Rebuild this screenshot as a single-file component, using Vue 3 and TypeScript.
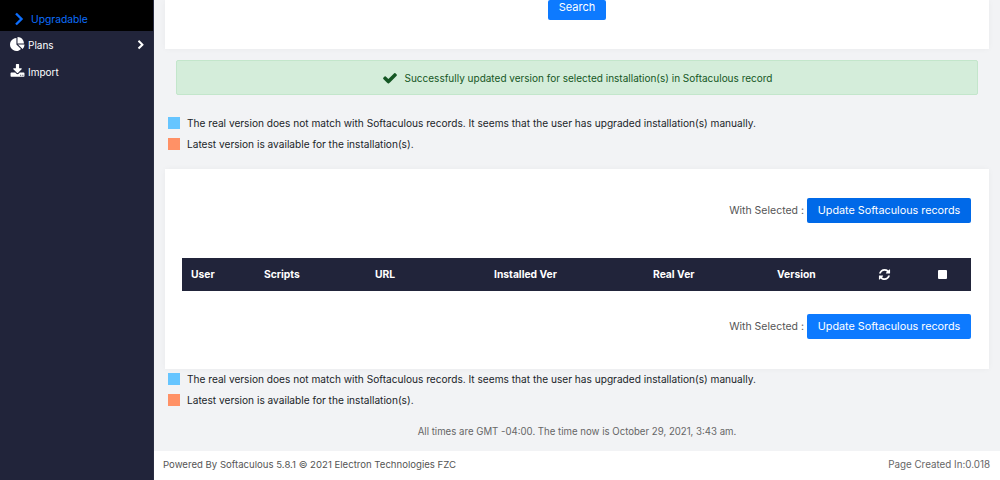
<script setup lang="ts">
const legends = [
  { color: 'blue', text: 'The real version does not match with Softaculous records. It seems that the user has upgraded installation(s) manually.' },
  { color: 'orange', text: 'Latest version is available for the installation(s).' },
]
const columns = [
  { label: 'User', width: 73 },
  { label: 'Scripts', width: 111 },
  { label: 'URL', width: 119 },
  { label: 'Installed Ver', width: 159 },
  { label: 'Real Ver', width: 124 },
  { label: 'Version', width: 110 },
]
</script>

<template>
  <div class="page">
    <aside class="sidebar">
      <div class="nav-active">
        <svg class="chev-active" viewBox="0 0 10 14" width="10" height="14"><path d="M2 1.5 L7.5 7 L2 12.5" fill="none" stroke="#0d6efd" stroke-width="2.4" /></svg>
        <span>Upgradable</span>
      </div>
      <div class="nav-item">
        <svg viewBox="0 0 1792 1792" width="15" height="15"><path fill="#fff" d="M768 890l546 546q-106 108-247.500 168t-298.500 60q-209 0-385.500-103t-279.500-279.500-103-385.500 103-385.500 279.500-279.500 385.500-103v762zm187 6h773q0 157-60 298.500t-168 247.500zm709-128h-768v-768q209 0 385.500 103t279.500 279.500 103 385.500z" /></svg>
        <span class="nav-label">Plans</span>
        <svg class="chev" viewBox="0 0 1792 1792" width="10" height="10"><path fill="#fff" d="M1363 877l-742 742q-19 19-45 19t-45-19l-166-166q-19-19-19-45t19-45l531-531-531-531q-19-19-19-45t19-45l166-166q19-19 45-19t45 19l742 742q19 19 19 45t-19 45z" /></svg>
      </div>
      <div class="nav-item import">
        <svg viewBox="0 0 1792 1792" width="15" height="15"><path fill="#fff" d="M1344 1344q0-26-19-45t-45-19-45 19-19 45 19 45 45 19 45-19 19-45zm256 0q0-26-19-45t-45-19-45 19-19 45 19 45 45 19 45-19 19-45zm128-224v320q0 40-28 68t-68 28h-1472q-40 0-68-28t-28-68v-320q0-40 28-68t68-28h465l135 136q58 56 136 56t136-56l136-136h464q40 0 68 28t28 68zm-325-569q17 41-14 70l-448 448q-18 19-45 19t-45-19l-448-448q-31-29-14-70 17-39 59-39h256v-448q0-26 19-45t45-19h256q26 0 45 19t19 45v448h256q42 0 59 39z" /></svg>
        <span class="nav-label">Import</span>
      </div>
    </aside>

    <div class="main">
      <div class="content">
        <section class="search-card">
          <button class="btn search-btn">Search</button>
        </section>

        <div class="alert">
          <svg viewBox="0 0 1792 1792" width="16" height="16"><path fill="#155724" d="M1671 566q0 40-28 68l-724 724-136 136q-28 28-68 28t-68-28l-136-136-362-362q-28-28-28-68t28-68l136-136q28-28 68-28t68 28l294 295 656-657q28-28 68-28t68 28l136 136q28 28 28 68z" /></svg>
          <span>Successfully updated version for selected installation(s) in Softaculous record</span>
        </div>

        <div class="legend first">
          <div v-for="l in legends" :key="l.color" class="legend-row">
            <i class="swatch" :class="l.color"></i><span>{{ l.text }}</span>
          </div>
        </div>

        <section class="table-card">
          <div class="with-selected">
            <span>With Selected :</span>
            <button class="btn update dark">Update Softaculous records</button>
          </div>
          <div class="thead">
            <span v-for="c in columns" :key="c.label" class="th" :style="{ width: c.width + 'px' }">{{ c.label }}</span>
            <svg class="refresh" viewBox="0 0 1792 1792" width="13" height="13"><path fill="#fff" d="M1639 1056q0 5-1 7-64 268-268 434.500t-478 166.500q-146 0-282.500-55t-243.500-157l-129 129q-19 19-45 19t-45-19-19-45v-448q0-26 19-45t45-19h448q26 0 45 19t19 45-19 45l-137 137q71 66 161 102t187 36q134 0 250-65t186-179q11-17 53-117 8-23 30-23h192q13 0 22.500 9.500t9.500 22.500zm25-800v448q0 26-19 45t-45 19h-448q-26 0-45-19t-19-45 19-45l138-138q-148-137-349-137-134 0-250 65t-186 179q-11 17-53 117-8 23-30 23h-199q-13 0-22.500-9.500t-9.500-22.500v-7q65-268 270-434.500t480-166.500q146 0 284 55.500t245 156.500l130-129q19-19 45-19t45 19 19 45z" /></svg>
            <i class="checkbox"></i>
          </div>
          <div class="with-selected bottom">
            <span>With Selected :</span>
            <button class="btn update">Update Softaculous records</button>
          </div>
        </section>

        <div class="legend second">
          <div v-for="l in legends" :key="l.color" class="legend-row">
            <i class="swatch" :class="l.color"></i><span>{{ l.text }}</span>
          </div>
        </div>

        <p class="times">All times are GMT -04:00. The time now is October 29, 2021, 3:43 am.</p>
      </div>

      <footer class="footer">
        <span>Powered By Softaculous 5.8.1 © 2021 Electron Technologies FZC</span>
        <span class="created">Page Created In:0.018</span>
      </footer>
    </div>
  </div>
</template>

<style>
html, body { margin: 0; overflow: hidden; }
</style>

<style scoped>
.page {
  display: flex;
  width: 1000px;
  height: 480px;
  overflow: hidden;
  font-family: "Inter", "Noto Sans", sans-serif;
  font-size: 10px;
  color: #212529;
}
.sidebar {
  width: 154px;
  flex: none;
  background: #21243a;
  color: #fff;
  font-size: 10px;
  border-right: 1px solid #2a2d42;
  box-sizing: border-box;
}
.nav-active {
  height: 31px;
  background: #000;
  color: #0d6efd;
  display: flex;
  align-items: center;
  padding: 6px 0 0 14px;
  box-sizing: border-box;
  gap: 7px;
  font-size: 10.3px;
}
.nav-item {
  height: 27px;
  display: flex;
  align-items: center;
  padding: 0 7px 0 10px;
  gap: 3px;
}
.nav-label { flex: 1; }
.main {
  flex: 1;
  display: flex;
  flex-direction: column;
  background: #f2f3f5;
  min-width: 0;
}
.content {
  flex: 1;
  padding: 0 11px;
  min-height: 0;
}
.search-card {
  height: 49px;
  background: #fff;
  display: flex;
  justify-content: center;
  align-items: flex-start;
  box-shadow: 0 0 6px rgba(0, 0, 0, 0.04);
}
.btn {
  border: 0;
  color: #fff;
  background: #0d7aff;
  border-radius: 2px;
  font-family: inherit;
  padding: 0;
}
.search-btn {
  width: 58px;
  height: 20px;
  font-size: 11px;
  line-height: 14px;
  padding-bottom: 7px;
}
.alert {
  margin: 11px 11px 0;
  height: 35px;
  box-sizing: border-box;
  background: #d4edda;
  border: 1px solid #c3e6cb;
  border-radius: 2px;
  color: #155724;
  display: flex;
  align-items: center;
  justify-content: center;
  gap: 7px;
  font-size: 10px;
}
.legend { padding-left: 3px; }
.legend.first { margin-top: 17.5px; }
.legend.second { margin-top: -0.5px; }
.legend-row {
  height: 21px;
  display: flex;
  align-items: center;
  gap: 7px;
  font-size: 10.15px;
}
.swatch {
  width: 12px;
  height: 12px;
  flex: none;
}
.swatch.blue { background: #66c5ff; }
.swatch.orange { background: #ff9166; }
.table-card {
  margin-top: 14.5px;
  height: 200px;
  box-sizing: border-box;
  background: #fff;
  padding: 29px 18px 0 17px;
  box-shadow: 0 0 6px rgba(0, 0, 0, 0.04);
}
.with-selected {
  display: flex;
  justify-content: flex-end;
  align-items: center;
  gap: 3px;
  height: 25px;
  color: #555;
  font-size: 10.5px;
}
.with-selected.bottom { margin-top: 23px; }
.update {
  width: 164px;
  height: 25px;
  font-size: 10.8px;
}
.update.dark { background: #0069e8; }
.thead {
  margin-top: 35px;
  height: 33px;
  background: #21243a;
  display: flex;
  align-items: center;
  color: #fff;
  font-weight: 700;
  font-size: 10.3px;
}
.th {
  flex: none;
  box-sizing: border-box;
  padding: 0 0 2px 9px;
}
.checkbox {
  width: 9px;
  height: 9px;
  margin-left: 47px;
  background: #fff;
  border-radius: 1px;
}
.times {
  margin: 13.5px 0 0;
  text-align: center;
  color: #666;
  font-size: 9.65px;
  line-height: 16px;
}
.footer {
  height: 29px;
  flex: none;
  box-sizing: border-box;
  background: #fff;
  display: flex;
  justify-content: space-between;
  align-items: center;
  padding: 0 10px 3px 9px;
  color: #555;
  font-size: 9.6px;
}
.created { color: #666; font-size: 9.8px; }
</style>
